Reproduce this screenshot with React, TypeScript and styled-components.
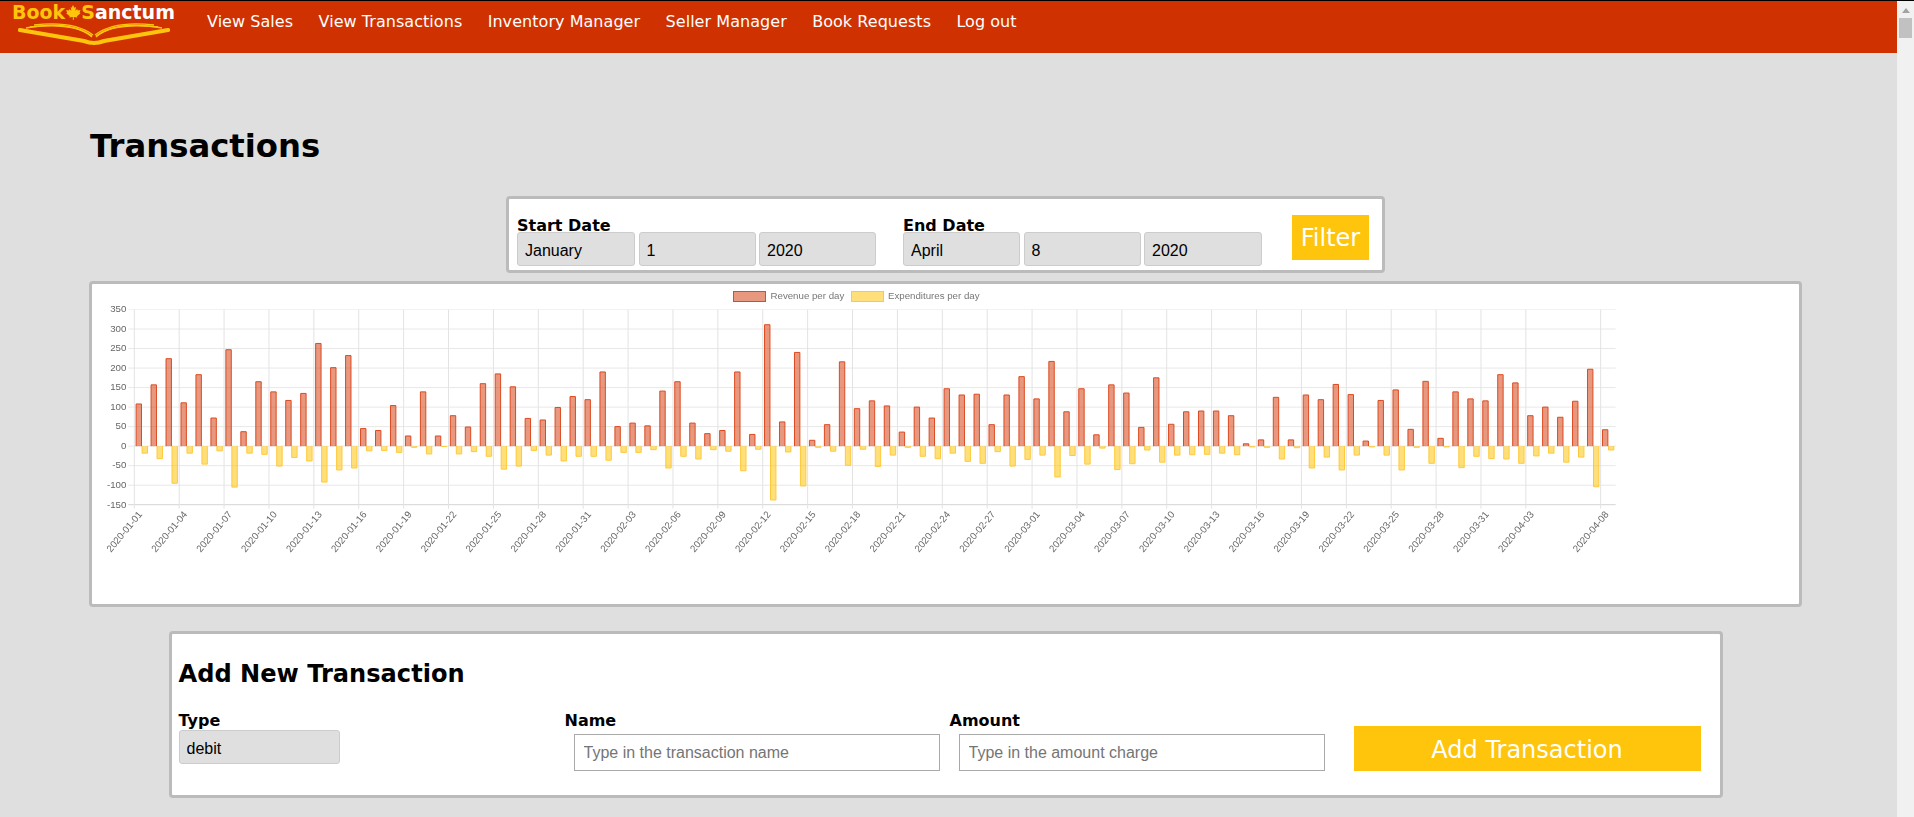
import React from "react"
import styled, { createGlobalStyle } from "styled-components"

const GlobalStyle = createGlobalStyle`
  html, body {
    margin: 0;
    padding: 0;
    background: #dfdfdf;
    overflow: hidden;
  }
`

const Page = styled.div`
  display: flex;
  height: 100vh;
  box-sizing: border-box;
  border-top: 1px solid #000;
  overflow: hidden;
  font-family: "DejaVu Sans", Verdana, sans-serif;
`

const Main = styled.div`
  flex: 1;
  min-width: 0;
`

const ScrollRail = styled.div`
  width: 17px;
  flex: none;
  display: flex;
  flex-direction: column;
  align-items: center;
  background: #f1f1f1;
`

const ScrollArrow = styled.div`
  width: 0;
  height: 0;
  margin-top: 7px;
  border-left: 4px solid transparent;
  border-right: 4px solid transparent;
  border-bottom: 5px solid #a3a3a3;
`

const ScrollThumb = styled.div`
  width: 13px;
  height: 20px;
  margin-top: 5px;
  background: #c1c1c1;
`

const NavBar = styled.nav`
  display: flex;
  height: 52px;
  background: #d03100;
`

const Logo = styled.a`
  width: 194.3px;
  flex: none;
  box-sizing: border-box;
  padding: 1px 0 0 12px;
  text-decoration: none;
`

const LogoText = styled.div`
  display: flex;
  align-items: center;
  height: 20px;
  font-size: 19px;
  font-weight: bold;
  color: #fff;
  white-space: nowrap;
`

const LogoGold = styled.span`
  color: #ffc40c;
`

const LogoBook = styled.svg`
  display: block;
  margin: 0 0 0 6px;
`

const NavLink = styled.a`
  padding: 0 12.7px;
  font-size: 16px;
  letter-spacing: 0.05px;
  line-height: 42px;
  color: #fff;
  white-space: nowrap;
`

const Content = styled.main`
  width: 1713px;
  margin-left: 89px;
  display: flex;
  flex-direction: column;
  align-items: center;
`

const Title = styled.h1`
  align-self: flex-start;
  margin: 74px 0 30px 1px;
  font-size: 32.3px;
  line-height: 39px;
  color: #000;
`

const Panel = styled.section`
  box-sizing: border-box;
  background: #fff;
  border: 3px solid #bbb;
  border-radius: 4px;
`

const FilterPanel = styled(Panel)`
  display: flex;
  align-items: flex-end;
  width: 879px;
  height: 77px;
  margin-bottom: 8px;
  padding: 0 13px 4px 8px;
`

const DateGroup = styled.div`
  margin-right: 27px;
  &:nth-child(2) {
    margin-right: 30px;
  }
`

const FieldLabel = styled.label`
  display: block;
  font-size: 16px;
  font-weight: bold;
  line-height: 13px;
  color: #000;
  white-space: nowrap;
`

const SelectRow = styled.div`
  display: flex;
  gap: 3.5px;
`

const Select = styled.select<{ $width: number }>`
  display: block;
  box-sizing: border-box;
  width: ${props => props.$width}px;
  height: 34px;
  margin: 0;
  padding: 2px 7px 0;
  appearance: none;
  background: #dfdfdf;
  border: 1px solid #ccc;
  border-radius: 3px;
  font-family: "Liberation Sans", Arial, sans-serif;
  font-size: 16px;
  color: #000;
`

const TypeSelect = styled(Select)`
  margin-top: 3px;
`

const ActionButton = styled.button`
  box-sizing: border-box;
  margin: 0;
  padding: 0 0 0;
  background: #ffc40c;
  border: 0;
  font-family: "DejaVu Sans", Verdana, sans-serif;
  font-size: 24px;
  color: #fff;
`

const FilterButton = styled(ActionButton)`
  width: 77px;
  height: 45px;
  margin-bottom: 6px;
`

const ChartPanel = styled(Panel)`
  width: 100%;
  height: 326px;
  margin-bottom: 24px;
`

const ChartSvg = styled.svg`
  display: block;
  filter: blur(0.3px);
  font-family: "Liberation Sans", Arial, sans-serif;
  font-size: 9.7px;
`

const AddPanel = styled(Panel)`
  width: 1554px;
  height: 167px;
  padding: 0 18px 0 7px;
`

const AddTitle = styled.h2`
  margin: 26px 0 26px;
  font-size: 24.1px;
  line-height: 28px;
  color: #000;
`

const AddRow = styled.div`
  display: flex;
  align-items: flex-start;
`

const AddField = styled.div<{ $width: number }>`
  width: ${props => props.$width}px;
  flex: none;
`

const TextInput = styled.input`
  display: block;
  box-sizing: border-box;
  width: 366px;
  height: 37px;
  margin: 7px 0 0 9px;
  padding: 0 9px;
  background: #fff;
  border: 1px solid #a9a9a9;
  font-family: "Liberation Sans", Arial, sans-serif;
  font-size: 16px;
  color: #000;
  &::placeholder {
    color: #757575;
    opacity: 1;
  }
`

const AddButton = styled(ActionButton)`
  width: 347px;
  height: 45px;
  margin-top: 12px;
  padding-top: 2px;
`

const revenue = [
  108, 157, 224, 111, 183, 72, 247, 37, 165, 139, 117, 135, 263, 201, 232, 45, 40, 104, 26, 139,
  26, 78, 49, 160, 185, 152, 71, 67, 99, 127, 119, 190, 50, 59, 52, 141, 165, 59, 32, 40,
  190, 30, 311, 62, 240, 15, 55, 216, 96, 116, 103, 36, 100, 72, 147, 131, 133, 55, 131, 178,
  121, 217, 88, 147, 29, 157, 136, 48, 175, 56, 88, 90, 90, 78, 6, 16, 125, 16, 131, 119,
  158, 132, 13, 117, 144, 43, 166, 20, 139, 121, 116, 183, 162, 78, 100, 74, 115, 197, 42,
]

const expenditures = [
  18, 32, 95, 18, 46, 12, 105, 18, 21, 51, 29, 38, 92, 61, 56, 12, 11, 16, 3, 20,
  1, 20, 14, 26, 59, 51, 11, 23, 38, 26, 26, 36, 16, 16, 9, 56, 26, 33, 9, 13,
  63, 8, 138, 15, 102, 3, 13, 49, 8, 52, 23, 3, 26, 32, 18, 39, 44, 14, 51, 34,
  23, 79, 24, 46, 5, 60, 45, 10, 41, 23, 22, 21, 18, 22, 2, 3, 33, 4, 56, 28,
  61, 23, 2, 23, 61, 3, 44, 2, 55, 26, 32, 33, 44, 25, 18, 41, 28, 104, 10,
]

// chart coordinates are relative to the inside of the panel
const plotLeft = 42.3
const plotRight = 1523.7
const plotTop = 25.5
const plotBottom = 220.7
const dayStep = 14.963
const valueToY = (value: number) => plotTop + ((350 - value) / 500) * (plotBottom - plotTop)
const zeroY = valueToY(0)

const dayLabel = (index: number) =>
  new Date(Date.UTC(2020, 0, index + 1)).toISOString().slice(0, 10)

const tickDays = [...Array.from({ length: 32 }, (_, i) => i * 3), 98]
const yTicks = [350, 300, 250, 200, 150, 100, 50, 0, -50, -100, -150]

const REVENUE_FILL = "rgba(208, 49, 0, 0.5)"
const REVENUE_LINE = "#dd4b20"
const EXPENSE_FILL = "rgba(255, 196, 12, 0.55)"
const EXPENSE_LINE = "#ffc93a"

const Bar = (props: { x: number; value: number; fill: string; line: string }) => {
  const y = valueToY(props.value)
  const right = props.x + 5.4
  return (
    <path
      d={`M${props.x} ${zeroY}V${y}H${right}V${zeroY}`}
      fill={props.fill}
      stroke={props.line}
      strokeWidth="1"
    />
  )
}

const TransactionsChart = () => (
  <ChartSvg width="1707" height="320" viewBox="0 0 1707 320">
    <rect x="641.5" y="7.5" width="32" height="10" fill={REVENUE_FILL} stroke={REVENUE_LINE} />
    <text x="678.5" y="15" fill="#777">Revenue per day</text>
    <rect x="759.5" y="7.5" width="32" height="10" fill={EXPENSE_FILL} stroke={EXPENSE_LINE} />
    <text x="796" y="15" fill="#777">Expenditures per day</text>

    {yTicks.map(tick => {
      const y = valueToY(tick)
      return (
        <g key={tick}>
          <line
            x1={plotLeft - 6}
            x2={plotRight}
            y1={y}
            y2={y}
            stroke={tick === -150 ? "#d4d4d4" : tick === 350 ? "#f2f2f2" : "#e8e8e8"}
          />
          <text x={plotLeft - 8} y={y + 2.8} textAnchor="end" fill="#666">
            {tick}
          </text>
        </g>
      )
    })}

    {tickDays.map(day => {
      const x = plotLeft + day * dayStep
      return (
        <g key={day}>
          <line x1={x} x2={x} y1={plotTop} y2={plotBottom + 4} stroke="#e3e3e3" />
          <text
            transform={`translate(${x + 8.5} ${plotBottom + 10}) rotate(-50)`}
            textAnchor="end"
            fill="#666"
          >
            {dayLabel(day)}
          </text>
        </g>
      )
    })}

    {revenue.map((value, day) => {
      const start = plotLeft + day * dayStep + 1.8
      return (
        <g key={day}>
          <Bar x={start} value={value} fill={REVENUE_FILL} line={REVENUE_LINE} />
          <Bar x={start + 5.98} value={-expenditures[day]} fill={EXPENSE_FILL} line={EXPENSE_LINE} />
        </g>
      )
    })}
  </ChartSvg>
)

const MapleLeaf = () => (
  <svg width="16" height="15" viewBox="0 0 17 16" style={{ flex: "none" }}>
    <path
      d="M8.5 0L10 3l1.7-.8-.7 4 2-1.9.6 1.5 2.9-.4-1 2.9 1 .6-3.8 3 .5 1.4-3.9-.5.2 3H8.2l.2-3-3.9.5.5-1.4-3.8-3 1-.6-1-2.9 2.9.4.6-1.5 2 1.9-.7-4L7 3z"
      fill="#ffc40c"
    />
  </svg>
)

const BookMark = () => (
  <LogoBook width="152" height="24" viewBox="0 0 152 24" fill="none" stroke="#ffc40c">
    <path d="M2 8L66 19Q76 23 86 19L150 8" strokeWidth="4.2" strokeLinecap="round" />
    <path d="M8 6C36 1 60 3 74 15" strokeWidth="1.5" />
    <path d="M16 3C42 0 62 3 75 13" strokeWidth="1.3" />
    <path d="M12 5C40 2 61 4 74 14" strokeWidth="1.3" />
    <path d="M144 6C116 1 92 3 78 15" strokeWidth="1.5" />
    <path d="M136 3C110 0 90 3 77 13" strokeWidth="1.3" />
    <path d="M140 5C112 2 91 4 78 14" strokeWidth="1.3" />
  </LogoBook>
)

const navItems = [
  "View Sales",
  "View Transactions",
  "Inventory Manager",
  "Seller Manager",
  "Book Requests",
  "Log out",
]

const DateSelect = (props: { value: string; width: number }) => (
  <Select $width={props.width} defaultValue={props.value}>
    <option>{props.value}</option>
  </Select>
)

const App = () => (
  <Page>
    <GlobalStyle />
    <Main>
      <NavBar>
        <Logo>
          <LogoText>
            <LogoGold>Book</LogoGold>
            <MapleLeaf />
            <LogoGold>S</LogoGold>
            anctum
          </LogoText>
          <BookMark />
        </Logo>
        {navItems.map(item => (
          <NavLink key={item}>{item}</NavLink>
        ))}
      </NavBar>
      <Content>
        <Title>Transactions</Title>
        <FilterPanel>
          <DateGroup>
            <FieldLabel>Start Date</FieldLabel>
            <SelectRow>
              <DateSelect value="January" width={118} />
              <DateSelect value="1" width={117} />
              <DateSelect value="2020" width={117} />
            </SelectRow>
          </DateGroup>
          <DateGroup>
            <FieldLabel>End Date</FieldLabel>
            <SelectRow>
              <DateSelect value="April" width={117} />
              <DateSelect value="8" width={117} />
              <DateSelect value="2020" width={118} />
            </SelectRow>
          </DateGroup>
          <FilterButton>Filter</FilterButton>
        </FilterPanel>
        <ChartPanel>
          <TransactionsChart />
        </ChartPanel>
        <AddPanel>
          <AddTitle>Add New Transaction</AddTitle>
          <AddRow>
            <AddField $width={386}>
              <FieldLabel>Type</FieldLabel>
              <TypeSelect $width={161} defaultValue="debit">
                <option>debit</option>
              </TypeSelect>
            </AddField>
            <AddField $width={385}>
              <FieldLabel>Name</FieldLabel>
              <TextInput placeholder="Type in the transaction name" />
            </AddField>
            <AddField $width={404}>
              <FieldLabel>Amount</FieldLabel>
              <TextInput placeholder="Type in the amount charge" />
            </AddField>
            <AddButton>Add Transaction</AddButton>
          </AddRow>
        </AddPanel>
      </Content>
    </Main>
    <ScrollRail>
      <ScrollArrow />
      <ScrollThumb />
    </ScrollRail>
  </Page>
)

export default App
